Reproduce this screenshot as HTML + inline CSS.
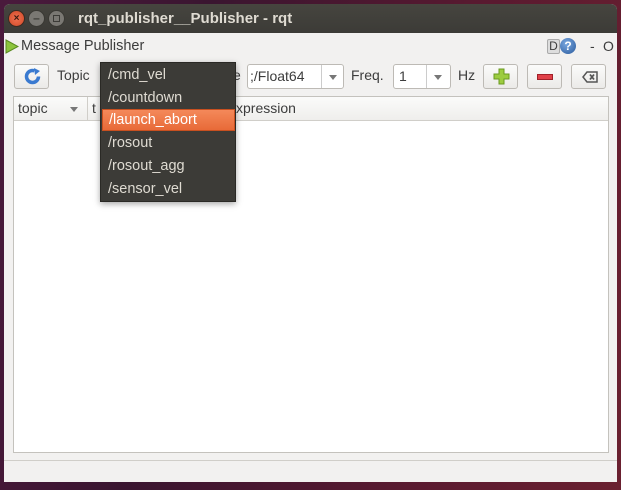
<!DOCTYPE html>
<html><head><style>
*{margin:0;padding:0;box-sizing:border-box}
body{width:621px;height:490px;overflow:hidden;position:relative;font-family:"Liberation Sans","DejaVu Sans",sans-serif;font-size:14px;color:#3c3c3c;
background:linear-gradient(100deg,#4a1a3c 0%,#3a1530 30%,#5a1a30 70%,#6a2030 100%)}
.abs{position:absolute}
#win{left:4px;top:4px;width:613px;height:478px;background:#f2f1f0;border-radius:6px 6px 0 0;overflow:hidden}
#title{left:0;top:0;width:613px;height:29px;background:linear-gradient(#46453f,#3c3b37);color:#dfdbd2;font-weight:bold;font-size:15px}
.btn{position:absolute;border:1px solid #bdbab5;border-radius:3px;background:linear-gradient(#fbfbfa,#ebeae8)}
.combo{position:absolute;border:1px solid #bdbab5;border-radius:3px;background:#fff}
.arrow{position:absolute;width:0;height:0;border-left:4px solid transparent;border-right:4px solid transparent;border-top:5px solid #777}
.item{position:absolute;left:1px;width:133px;height:22px;line-height:22px;padding-left:6px;color:#dfdbd2;font-size:14.5px}
</style></head><body>
<div id="win" class="abs">
 <div id="title" class="abs">
  <div class="abs" style="left:4px;top:6px;width:17px;height:17px;border-radius:50%;background:radial-gradient(#f07050,#d04a28);border:1px solid #3a2a22;color:#3a1a10;font-size:10px;text-align:center;line-height:15px">×</div>
  <div class="abs" style="left:24px;top:6px;width:17px;height:17px;border-radius:50%;background:#7a7873;border:1px solid #3a3934;color:#3c3b37;font-size:12px;text-align:center;line-height:14px">–</div>
  <div class="abs" style="left:44px;top:6px;width:17px;height:17px;border-radius:50%;background:#7a7873;border:1px solid #3a3934"><div class="abs" style="left:4px;top:4px;width:7px;height:7px;border:1px solid #3c3b37"></div></div>
  <div class="abs" style="left:74px;top:6px">rqt_publisher__Publisher - rqt</div>
 </div>
 <svg class="abs" style="left:1px;top:35px" width="14" height="15"><polygon points="1,1 13,7.5 1,14" fill="#8cc43c" stroke="#5a8a20"/></svg>
 <div class="abs" style="left:17px;top:34px;font-size:14.5px">Message Publisher</div>
 <div class="abs" style="left:543px;top:35px;width:13px;height:15px;background:#ddd;border:1px solid #aaa;border-radius:2px;font-size:12px;text-align:center;line-height:13px">D</div>
 <div class="abs" style="left:556px;top:34px;width:16px;height:16px;border-radius:50%;background:radial-gradient(circle at 40% 35%,#7aa8e0,#2a5a9c);color:#fff;font-size:12px;font-weight:bold;text-align:center;line-height:16px">?</div>
 <div class="abs" style="left:586px;top:34px">-</div><div class="abs" style="left:599px;top:34px">O</div>
 <div class="btn" style="left:10px;top:60px;width:35px;height:25px"><svg class="abs" style="left:9px;top:3px" width="17" height="17"><circle cx="8.5" cy="8.5" r="6" fill="none" stroke="#3a7ad0" stroke-width="3.5" stroke-dasharray="30 8"/><polygon points="10,0 16,3 11,7" fill="#3a7ad0"/></svg></div>
 <div class="abs" style="left:53px;top:63px">Topic</div>
 <div class="abs" style="left:229px;top:63px">e</div>
 <div class="combo" style="left:243px;top:60px;width:97px;height:25px"><span class="abs" style="left:2px;top:3px">;/Float64</span><div class="abs" style="left:73px;top:0;width:1px;height:23px;background:#ccc"></div><div class="arrow" style="left:81px;top:10px"></div></div>
 <div class="abs" style="left:347px;top:63px">Freq.</div>
 <div class="combo" style="left:389px;top:60px;width:58px;height:25px"><span class="abs" style="left:5px;top:3px">1</span><div class="abs" style="left:32px;top:0;width:1px;height:23px;background:#ccc"></div><div class="arrow" style="left:40px;top:10px"></div></div>
 <div class="abs" style="left:454px;top:63px">Hz</div>
 <div class="btn" style="left:479px;top:60px;width:35px;height:25px"><svg class="abs" style="left:9px;top:3px" width="17" height="17"><path d="M6 1h5v5h5v5h-5v5h-5v-5h-5v-5h5z" fill="#9ccc40" stroke="#6a9a20"/></svg></div>
 <div class="btn" style="left:523px;top:60px;width:35px;height:25px"><div class="abs" style="left:9px;top:9px;width:16px;height:6px;background:#e04048;border:1px solid #a02028"></div></div>
 <div class="btn" style="left:567px;top:60px;width:35px;height:25px"><svg class="abs" style="left:10px;top:6px" width="16" height="12"><path d="M5 1h10v10H5L1 6z" fill="none" stroke="#555" stroke-width="1.5"/><path d="M8 3.5l4 5M12 3.5l-4 5" stroke="#555" stroke-width="1.8"/></svg></div>
 <div class="abs" style="left:9px;top:92px;width:596px;height:357px;background:#fff;border:1px solid #c4c2bd"></div>
 <div class="abs" style="left:10px;top:93px;width:594px;height:24px;background:linear-gradient(#fbfbfa,#efeeec);border-bottom:1px solid #d0cec9"></div>
 <div class="abs" style="left:14px;top:96px">topic</div><div class="arrow" style="left:66px;top:103px"></div>
 <div class="abs" style="left:83px;top:93px;width:1px;height:24px;background:#d0cec9"></div>
 <div class="abs" style="left:88px;top:96px">t</div>
 <div class="abs" style="left:232px;top:96px">xpression</div>
 <div class="abs" style="left:0;top:456px;width:613px;height:1px;background:#d0cec9"></div>
</div>
<div class="abs" style="left:100px;top:62px;width:136px;height:140px;background:#3c3b37;border:1px solid #2a2925;box-shadow:0 2px 6px rgba(0,0,0,.35)">
 <div class="item" style="top:1px">/cmd_vel</div>
 <div class="item" style="top:24px">/countdown</div>
 <div class="item" style="top:46px;background:linear-gradient(#f4895a,#e86a38);border:1px solid #c85020;color:#fff;line-height:20px">/launch_abort</div>
 <div class="item" style="top:69px">/rosout</div>
 <div class="item" style="top:92px">/rosout_agg</div>
 <div class="item" style="top:115px">/sensor_vel</div>
</div>
</body></html>
